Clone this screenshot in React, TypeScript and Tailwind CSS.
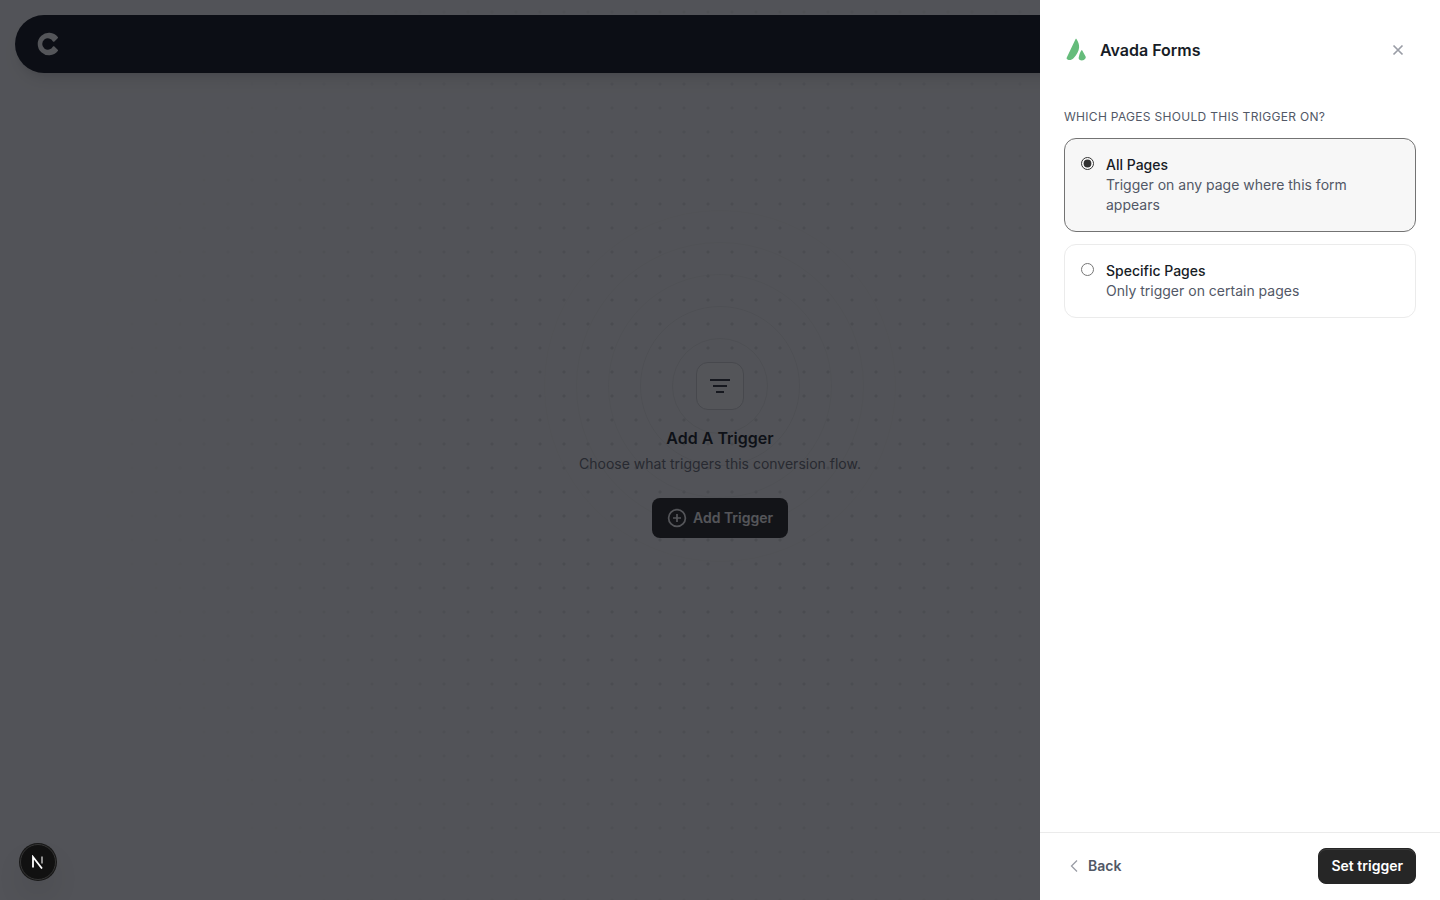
import { useState } from "react";

const pageOptions = [
  { value: "all", label: "All Pages", description: "Trigger on any page where this form appears" },
  { value: "specific", label: "Specific Pages", description: "Only trigger on certain pages" },
];

function BrandMark() {
  return (
    <svg width="24" height="24" viewBox="0 0 24 24" fill="#fff" aria-hidden="true">
      <path d="M22.800 4.900c.4.500.3.900-.1 1.300l-3.300 3.300c-.5.500-1 .4-1.400-.1a5.700 5.700 0 1 0 0 5.200c.4-.5.900-.6 1.400-.1l3.300 3.300c.4.400.5.800.1 1.300A11.300 11.300 0 1 1 22.800 4.900z" />
    </svg>
  );
}

function AvadaLogo() {
  return (
    <svg width="24" height="24" viewBox="0 0 24 24" fill="#65bc7b" aria-hidden="true">
      <path d="M11.600 1.100c.3-.4.700-.3 1 .2 1.700 2.600 2.700 5.300 2.500 8.300-.2 3.800-2.500 7.500-5.600 10.600-1.700 1.700-3.900 2.300-6 1.200-.9-.4-1.100-1-.7-1.900z" />
      <path d="M17.200 12.500c.3-.4.800-.4 1.100 0l3.300 6c.3.600.2 1.200-.2 1.900-1.200 1.900-3.700 2.500-5.500 1.500-1-.5-1.400-1.400-1.200-2.400.5-2.500 1.200-4.900 2.500-7z" />
    </svg>
  );
}

function CanvasBackground() {
  return (
    <div className="absolute inset-0 bg-[radial-gradient(circle,#dcdde0_1px,transparent_2px)] bg-size-[24px_24px] mask-[radial-gradient(circle_at_center,black_20%,transparent_75%)]" />
  );
}

function EmptyState() {
  return (
    <div className="relative flex flex-col items-center">
      <svg className="absolute -top-42 left-1/2 -translate-x-1/2" width="384" height="384" fill="none" stroke="#e8e9ec" aria-hidden="true">
        <circle cx="192" cy="192" r="47.500" />
        <circle cx="192" cy="192" r="79.500" opacity=".85" />
        <circle cx="192" cy="192" r="111.500" opacity=".6" />
        <circle cx="192" cy="192" r="143.500" opacity=".5" />
        <circle cx="192" cy="192" r="175.500" opacity=".3" />
      </svg>
      <div className="relative flex size-12 items-center justify-center rounded-xl border border-[#d3d4d8] bg-white">
        <svg width="20" height="14" viewBox="0 0 20 14" stroke="#31353f" strokeWidth="2" aria-hidden="true">
          <path d="M0 1h20M3 7h14M6 13h8" />
        </svg>
      </div>
      <h1 className="relative mt-4 text-base leading-6 font-semibold text-[#171c26]">Add A Trigger</h1>
      <p className="relative mt-1 text-sm leading-5 text-[#6b6f79]">Choose what triggers this conversion flow.</p>
      <button type="button" className="relative mt-6 flex h-10 items-center gap-1.5 rounded-lg bg-[#262626] px-[15px] text-sm font-semibold text-white">
        <svg width="20" height="20" viewBox="0 0 20 20" fill="none" stroke="currentColor" strokeWidth="1.700" aria-hidden="true">
          <circle cx="10" cy="10" r="8.400" />
          <path d="M10 6v8M6 10h8" />
        </svg>
        Add Trigger
      </button>
    </div>
  );
}

function TriggerPanel() {
  const [selected, setSelected] = useState("all");

  return (
    <aside className="relative flex h-full w-[400px] flex-col bg-white">
      <header className="flex items-center gap-3 px-6 py-8">
        <AvadaLogo />
        <h2 className="flex-1 text-base font-semibold text-[#171c26]">Avada Forms</h2>
        <button type="button" aria-label="Close" className="flex size-9 items-center justify-center text-[#9a9da6]">
          <svg width="12" height="12" viewBox="0 0 12 12" fill="none" stroke="currentColor" strokeWidth="1.700" aria-hidden="true">
            <path d="M1.500 1.500l9 9M10.500 1.500l-9 9" />
          </svg>
        </button>
      </header>

      <fieldset className="flex-1 px-6 pt-2">
        <legend className="float-left mb-3 w-full text-xs leading-[18px] tracking-wide text-[#525866] uppercase">
          Which pages should this trigger on?
        </legend>
        <div className="clear-both flex flex-col gap-3">
          {pageOptions.map((option) => (
            <label
              key={option.value}
              className={`flex items-start gap-3 rounded-xl border p-4 ${
                selected === option.value ? "border-[#737373] bg-[#f7f7f7]" : "border-[#ebebeb] bg-white"
              }`}
            >
              <input
                type="radio"
                name="pages"
                value={option.value}
                checked={selected === option.value}
                onChange={() => setSelected(option.value)}
                className="mt-0.5 size-[13px] shrink-0 accent-[#333]"
              />
              <span className="flex flex-col text-sm leading-5">
                <span className="font-medium text-[#171c26]">{option.label}</span>
                <span className="text-[#525866]">{option.description}</span>
              </span>
            </label>
          ))}
        </div>
      </fieldset>

      <footer className="flex items-center justify-between border-t border-[#ebebeb] px-6 pt-[15px] pb-4">
        <button type="button" className="flex h-9 items-center text-sm font-semibold text-[#525866]">
          <svg width="24" height="20" viewBox="0 0 24 20" fill="none" stroke="#9a9da6" strokeWidth="1.300" aria-hidden="true">
            <path d="M13 4.500L7.500 10l5.500 5.500" />
          </svg>
          Back
        </button>
        <button type="button" className="h-9 rounded-lg border border-[#262626] bg-[#262626] px-3 text-sm font-semibold text-white inset-shadow-[0_1px_0_#3c3c3c]">
          Set trigger
        </button>
      </footer>
    </aside>
  );
}

export default function App() {
  return (
    <div className="relative flex h-screen flex-col overflow-hidden bg-[#f9f9fa] font-['Inter',sans-serif]">
      <CanvasBackground />
      <nav className="relative mx-[15px] mt-[15px] flex h-[58px] items-center rounded-full bg-[#0e121b] px-5 shadow-lg">
        <BrandMark />
      </nav>
      <main className="absolute inset-0 flex items-center justify-center">
        <EmptyState />
      </main>

      <div className="absolute inset-0 flex justify-end bg-[#0b0d12]/70">
        <TriggerPanel />
      </div>

      <button type="button" aria-label="Open dev tools" className="absolute bottom-5 left-5 flex size-9 items-center justify-center rounded-full border border-[#343434] bg-[#111] shadow-[0_0_0_1px_#171717,0_16px_32px_-8px_rgba(0,0,0,0.24)]">
        <svg width="14" height="14" viewBox="0 0 14 14" fill="none" stroke="#fff" strokeWidth="1.800" aria-hidden="true">
          <path d="M2 12.500V2l9 11.500" />
          <path d="M11 1.500v7" opacity=".6" />
        </svg>
      </button>
    </div>
  );
}
